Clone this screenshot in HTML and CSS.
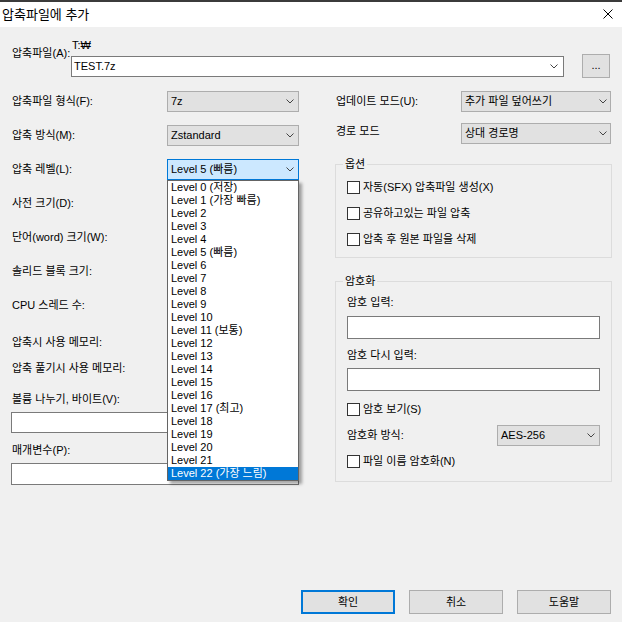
FILE: index.html
```html
<!DOCTYPE html>
<html lang="ko">
<head>
<meta charset="utf-8">
<title>압축파일에 추가</title>
<link rel="stylesheet" href="styles.css">
</head>
<body>
<div class="dialog">
  <div class="titlebar">
    <span class="title">압축파일에 추가</span>
    <svg class="close" width="10" height="10" viewBox="0 0 10 10"><path d="M0.5 0.5L9.5 9.5M9.5 0.5L0.5 9.5" stroke="#000" stroke-width="1" fill="none"/></svg>
  </div>
  <div class="content">
    <div class="filerow">
      <div class="filelabel">압축파일(A):</div>
      <div class="filecol">
        <div class="path">T:₩</div>
        <div class="combo combo-file"><span>TEST.7z</span><svg class="chev" width="8" height="5" viewBox="0 0 8 5"><path d="M0.5 0.5L4 4L7.5 0.5" stroke="#444" fill="none"/></svg></div>
      </div>
      <div class="dots">...</div>
    </div>

    <div class="columns">
      <div class="leftcol">
        <div class="lrow first"><div class="llabel">압축파일 형식(F):</div><div class="select lsel"><span>7z</span><svg class="chev" width="8" height="5" viewBox="0 0 8 5"><path d="M0.5 0.5L4 4L7.5 0.5" stroke="#444" fill="none"/></svg></div></div>
        <div class="lrow"><div class="llabel">압축 방식(M):</div><div class="select lsel"><span>Zstandard</span><svg class="chev" width="8" height="5" viewBox="0 0 8 5"><path d="M0.5 0.5L4 4L7.5 0.5" stroke="#444" fill="none"/></svg></div></div>
        <div class="lrow"><div class="llabel">압축 레벨(L):</div><div class="select lsel active"><span>Level 5 (빠름)</span><svg class="chev" width="8" height="5" viewBox="0 0 8 5"><path d="M0.5 0.5L4 4L7.5 0.5" stroke="#444" fill="none"/></svg></div></div>
        <div class="lrow"><div class="llabel">사전 크기(D):</div></div>
        <div class="lrow"><div class="llabel">단어(word) 크기(W):</div></div>
        <div class="lrow"><div class="llabel">솔리드 블록 크기:</div></div>
        <div class="lrow"><div class="llabel">CPU 스레드 수:</div></div>
        <div class="lrow mem1"><div class="llabel">압축시 사용 메모리:</div></div>
        <div class="lrow mem2"><div class="llabel">압축 풀기시 사용 메모리:</div></div>
        <div class="vlabel">볼륨 나누기, 바이트(V):</div>
        <div class="input vinput"></div>
        <div class="plabel">매개변수(P):</div>
        <div class="input pinput"></div>
      </div>

      <div class="rightcol">
        <div class="rrow"><div class="rlabel">업데이트 모드(U):</div><div class="select rsel"><span>추가 파일 덮어쓰기</span><svg class="chev" width="8" height="5" viewBox="0 0 8 5"><path d="M0.5 0.5L4 4L7.5 0.5" stroke="#444" fill="none"/></svg></div></div>
        <div class="rrow second"><div class="rlabel up">경로 모드</div><div class="select rsel"><span>상대 경로명</span><svg class="chev" width="8" height="5" viewBox="0 0 8 5"><path d="M0.5 0.5L4 4L7.5 0.5" stroke="#444" fill="none"/></svg></div></div>

        <fieldset class="group options">
          <legend>옵션</legend>
          <div class="check"><span class="box"></span><span>자동(SFX) 압축파일 생성(X)</span></div>
          <div class="check"><span class="box"></span><span>공유하고있는 파일 압축</span></div>
          <div class="check"><span class="box"></span><span>압축 후 원본 파일을 삭제</span></div>
        </fieldset>

        <fieldset class="group enc">
          <legend>암호화</legend>
          <div class="elabel first">암호 입력:</div>
          <div class="input einput"></div>
          <div class="elabel">암호 다시 입력:</div>
          <div class="input einput second"></div>
          <div class="check showpw"><span class="box"></span><span>암호 보기(S)</span></div>
          <div class="erow"><div class="elabel-inline">암호화 방식:</div><div class="select esel"><span>AES-256</span><svg class="chev" width="8" height="5" viewBox="0 0 8 5"><path d="M0.5 0.5L4 4L7.5 0.5" stroke="#444" fill="none"/></svg></div></div>
          <div class="check encname"><span class="box"></span><span>파일 이름 암호화(N)</span></div>
        </fieldset>
      </div>
    </div>

    <div class="buttons">
      <div class="btn default">확인</div>
      <div class="btn">취소</div>
      <div class="btn">도움말</div>
    </div>
  </div>

  <div class="droplist">
    <div class="item">Level 0 (저장)</div>
    <div class="item">Level 1 (가장 빠름)</div>
    <div class="item">Level 2</div>
    <div class="item">Level 3</div>
    <div class="item">Level 4</div>
    <div class="item">Level 5 (빠름)</div>
    <div class="item">Level 6</div>
    <div class="item">Level 7</div>
    <div class="item">Level 8</div>
    <div class="item">Level 9</div>
    <div class="item">Level 10</div>
    <div class="item">Level 11 (보통)</div>
    <div class="item">Level 12</div>
    <div class="item">Level 13</div>
    <div class="item">Level 14</div>
    <div class="item">Level 15</div>
    <div class="item">Level 16</div>
    <div class="item">Level 17 (최고)</div>
    <div class="item">Level 18</div>
    <div class="item">Level 19</div>
    <div class="item">Level 20</div>
    <div class="item">Level 21</div>
    <div class="item selected">Level 22 (가장 느림)</div>
  </div>
</div>
</body>
</html>
```

FILE: styles.css
```css
* { box-sizing: border-box; }
html, body { margin: 0; padding: 0; }
body {
  width: 622px;
  height: 622px;
  overflow: hidden;
  font-family: "Liberation Sans", "Noto Sans CJK KR", sans-serif;
  font-size: 11px;
  line-height: 13px;
  color: #000;
  background: #f0f0f0;
}
.dialog {
  position: relative;
  width: 622px;
  height: 622px;
  display: flex;
  flex-direction: column;
  background: #f0f0f0;
}
.titlebar {
  height: 27px;
  flex: none;
  border-top: 2px solid #3b3b3b;
  background: #fff;
  display: flex;
  align-items: center;
  justify-content: space-between;
  padding: 0 9px 1px 2px;
  font-size: 13px;
}
.close { display: block; }
.content {
  flex: 1;
  display: flex;
  flex-direction: column;
  padding: 0 10px 8px 11px;
}

/* file row */
.filerow { display: flex; margin-top: 12px; }
.filelabel { width: 60px; padding-left: 1px; padding-top: 8px; white-space: nowrap; }
.filecol { width: 493px; display: flex; flex-direction: column; }
.path { height: 17px; padding-left: 1px; }
.combo, .select {
  display: flex;
  align-items: center;
  justify-content: space-between;
  height: 21px;
  white-space: nowrap;
}
.chev { display: block; flex: none; }
.combo-file {
  background: #fff;
  border: 1px solid #7a7a7a;
  padding: 0 5px 0 2px;
}
.dots {
  width: 28px;
  height: 24px;
  margin-left: 18px;
  margin-top: 15px;
  background: #e1e1e1;
  border: 1px solid #adadad;
  display: flex;
  align-items: center;
  justify-content: center;
  padding-bottom: 2px;
}

.select {
  background: #e1e1e1;
  border: 1px solid #adadad;
  padding: 0 4px 0 3px;
}
.select.active {
  background: #cce8ff;
  border-color: #0078d7;
}

/* columns */
.columns { display: flex; margin-top: 13px; gap: 36px; }
.leftcol { width: 288px; display: flex; flex-direction: column; }
.rightcol { width: 277px; display: flex; flex-direction: column; }

.lrow { display: flex; align-items: center; height: 21px; margin-top: 13px; }
.lrow.first { margin-top: 0; }
.lrow.mem1 { margin-top: 16px; }
.lrow.mem2 { margin-top: 5px; }
.llabel { width: 156px; padding-left: 1px; white-space: nowrap; }
.lsel { width: 132px; }
.vlabel { margin-top: 14px; padding-left: 1px; }
.plabel { margin-top: 11px; padding-left: 1px; }
.input { background: #fff; border: 1px solid #7a7a7a; }
.vinput { margin-top: 6px; height: 21px; }
.pinput { margin-top: 6px; height: 22px; }

.rrow { display: flex; align-items: center; height: 21px; }
.rrow.second { margin-top: 11px; }
.rlabel { width: 126px; padding-left: 1px; white-space: nowrap; }
.rlabel.up { position: relative; top: -2px; }
.rsel { width: 150px; padding-right: 3px; }

/* groups */
.group {
  margin: 0;
  min-width: 0;
  border: 1px solid #dcdcdc;
  padding: 10px 11px 11px;
}
.group legend {
  padding: 0 2px;
  margin-left: -4px;
  line-height: 13px;
}
.options { margin-top: 14px; }
.enc { margin-top: 17px; padding: 8px 11px 13px; }

.check { display: flex; align-items: center; gap: 3px; height: 13px; white-space: nowrap; }
.options .check + .check { margin-top: 13px; }
.box {
  width: 13px;
  height: 13px;
  flex: none;
  border: 1px solid #333;
  background: #fff;
}

.elabel { margin-top: 10px; }
.elabel.first { margin-top: 0; }
.einput { margin-top: 7px; height: 23px; }
.einput.second { margin-top: 6px; }
.showpw { margin-top: 12px; }
.erow { display: flex; align-items: center; height: 21px; margin-top: 9px; }
.elabel-inline { width: 150px; }
.esel { width: 103px; }
.encname { margin-top: 9px; }

/* buttons */
.buttons {
  margin-top: auto;
  display: flex;
  justify-content: flex-end;
  gap: 14px;
  margin-right: 1px;
}
.btn {
  width: 94px;
  height: 24px;
  background: #e1e1e1;
  border: 1px solid #adadad;
  display: flex;
  align-items: center;
  justify-content: center;
}
.btn.default { border: 2px solid #0078d7; }

/* open dropdown list overlay */
.droplist {
  position: absolute;
  left: 167px;
  top: 180px;
  width: 132px;
  height: 301px;
  background: #fff;
  border: 1px solid #646464;
  box-shadow: 3px 3px 3px rgba(0, 0, 0, 0.35);
  z-index: 10;
}
.item {
  height: 13px;
  line-height: 13px;
  padding-left: 3px;
  white-space: nowrap;
}
.item.selected { background: #0078d7; color: #fff; }
```
